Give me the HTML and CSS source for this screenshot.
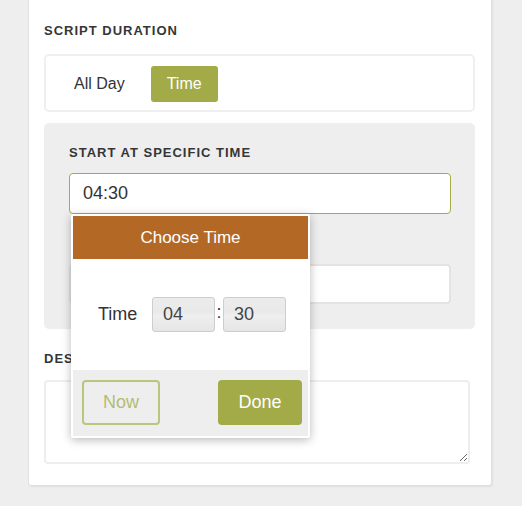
FILE: index.html
```html
<!DOCTYPE html>
<html>
<head>
<meta charset="utf-8">
<link rel="stylesheet" href="styles.css">
</head>
<body>
<div class="card">
  <h3 class="label">Script Duration</h3>
  <div class="segment">
    <button class="seg-btn">All Day</button>
    <button class="seg-btn active">Time</button>
  </div>
  <div class="panel">
    <h3 class="label">Start at specific time</h3>
    <div class="field-wrap">
      <input class="input focused" type="text" value="04:30">
      <div class="picker">
        <div class="picker-head">Choose Time</div>
        <div class="picker-body">
          <span class="picker-label">Time</span>
          <span class="spin">04</span>
          <span class="colon">:</span>
          <span class="spin">30</span>
        </div>
        <div class="picker-foot">
          <button class="btn-now">Now</button>
          <button class="btn-done">Done</button>
        </div>
      </div>
    </div>
    <input class="input second" type="text" value="">
  </div>
  <h3 class="label desc-label">Description</h3>
  <textarea class="textarea"></textarea>
</div>
</body>
</html>
```
FILE: styles.css
```css
html, body {
  margin: 0;
  padding: 0;
  background: #eeeeee;
  font-family: "Liberation Sans", Arial, sans-serif;
  color: #333;
}
body {
  height: 506px;
  overflow: hidden;
}
.card {
  margin: -10px 0 0 28px;
  width: 464px;
  box-sizing: border-box;
  background: #fff;
  border: 1px solid #e0e0e0;
  border-top: 0;
  border-radius: 0 0 3px 3px;
  padding: 33px 16px 21px 15px;
  box-shadow: 1px 1px 2px rgba(0, 0, 0, 0.06);
}
.label {
  margin: 0;
  font-size: 13px;
  line-height: 16px;
  font-weight: bold;
  letter-spacing: 1px;
  text-transform: uppercase;
  color: #363636;
}
.segment {
  margin-top: 15px;
  height: 58px;
  box-sizing: border-box;
  border: 2px solid #efefef;
  border-radius: 5px;
  display: flex;
  align-items: center;
  padding: 2px 0 0 12px;
  gap: 10px;
}
.seg-btn {
  height: 36px;
  padding: 0 16px;
  border: 0;
  background: transparent;
  font: inherit;
  font-size: 16px;
  color: #333;
  border-radius: 3px;
}
.seg-btn.active {
  background: #a2ab48;
  color: #fff;
}
.panel {
  margin-top: 11px;
  background: #eeeeee;
  border-radius: 5px;
  padding: 22px 24px 25px 25px;
}
.field-wrap {
  position: relative;
  margin-top: 12px;
}
.input {
  display: block;
  width: 100%;
  box-sizing: border-box;
  height: 41px;
  border-radius: 4px;
  padding: 0 13px;
  font: inherit;
  font-size: 18px;
  color: #333;
  background: #fff;
  outline: none;
}
.input.focused {
  border: 1px solid #a2ab48;
}
.input.second {
  margin-top: 50px;
  height: 40px;
  border: 2px solid #e3e3e3;
}
.picker {
  position: absolute;
  top: 41px;
  left: 2px;
  width: 239px;
  box-sizing: border-box;
  background: #fff;
  padding: 2px;
  border-radius: 2px;
  box-shadow: 0 2px 10px rgba(0, 0, 0, 0.28);
  z-index: 5;
}
.picker-head {
  height: 43px;
  background: #b46826;
  color: #fff;
  font-size: 17px;
  display: flex;
  align-items: center;
  justify-content: center;
}
.picker-body {
  height: 111px;
  display: flex;
  align-items: center;
  padding-left: 25px;
}
.picker-label {
  width: 54px;
  font-size: 18px;
  color: #333;
}
.spin {
  width: 63px;
  height: 35px;
  box-sizing: border-box;
  border: 1px solid #cdcdcd;
  border-radius: 3px;
  background: linear-gradient(to bottom, #ececec 0%, #e9e9e9 46%, #efefef 52%, #e5e5e5 100%);
  font-size: 18px;
  color: #444;
  padding-left: 10px;
  display: flex;
  align-items: center;
}
.colon {
  width: 8px;
  text-align: center;
  font-size: 18px;
  color: #333;
  margin-top: -4px;
}
.picker-foot {
  height: 66px;
  box-sizing: border-box;
  background: #eeeeee;
  padding: 10px 6px 0 9px;
  display: flex;
  justify-content: space-between;
  align-items: flex-start;
}
.btn-now, .btn-done {
  height: 45px;
  font: inherit;
  font-size: 18px;
  border-radius: 4px;
  padding: 0;
}
.btn-now {
  width: 78px;
  border: 2px solid #bcc47e;
  color: #b4bd70;
  background: transparent;
}
.btn-done {
  width: 84px;
  border: 0;
  background: #a2ab48;
  color: #fff;
}
.desc-label {
  margin-top: 22px;
}
.textarea {
  display: block;
  margin-top: 13px;
  width: 426px;
  height: 84px;
  box-sizing: border-box;
  border: 2px solid #eeeeee;
  border-radius: 4px;
  background: #fff;
  outline: none;
  font: inherit;
}
```
